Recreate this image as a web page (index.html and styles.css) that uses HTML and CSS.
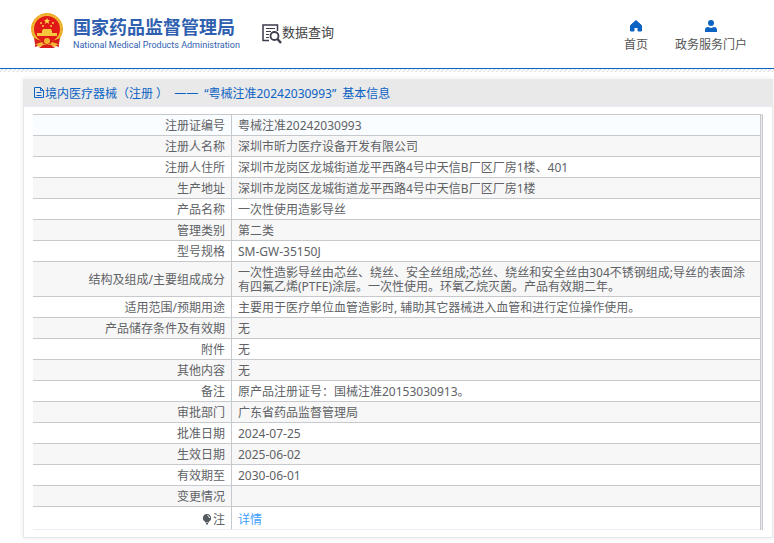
FILE: index.html
```html
<!DOCTYPE html>
<html lang="zh-CN">
<head>
    <meta charset="UTF-8">
    <meta name="viewport" content="width=device-width, initial-scale=1.0">
    <title>国家药品监督管理局 数据查询</title>
    <link rel="stylesheet" href="styles.css">
</head>
<body>
    <header class="header">
        <a href="#" class="logo">
            <svg class="emblem" width="34" height="36" viewBox="0 0 34 36">
                <path d="M6 24 L5 34 L11 32 L17 34 L23 32 L29 34 L28 24 Z" fill="#d81e1a"/>
                <circle cx="17" cy="16" r="16" fill="#f2b632"/>
                <circle cx="17" cy="16" r="15" fill="none" stroke="#dc9a20" stroke-width="1" stroke-dasharray="2 2"/>
                <circle cx="17" cy="16" r="13" fill="#e01818"/>
                <path d="M17 5 l1 2 h2 l-1.500 1.500 l.5 2.500 l-2 -1.500 l-2 1.500 l.5 -2.500 l-1.500 -1.500 h2 Z" fill="#ffd84a"/>
                <g fill="#f8c63c">
                    <circle cx="11" cy="10" r="1"/>
                    <circle cx="23" cy="10" r="1"/>
                    <circle cx="13" cy="13" r="1"/>
                    <circle cx="21" cy="13" r="1"/>
                    <path d="M13 16 h8 l1 2 h-10 Z M12 18 h10 v2 h5 v3 h-20 v-3 h5 Z"/>
                </g>
                <path d="M4 25 Q11 29 17 27 Q23 29 30 25 L29 31 Q22 29 17 32 Q12 29 5 31 Z" fill="#d81e1a"/>
                <circle cx="17" cy="28" r="3" fill="#f2b632"/>
                <path d="M6 31 L12 29 L14 32 L9 34 Z M28 31 L22 29 L20 32 L25 34 Z" fill="#f2b632"/>
                <path d="M13 32 L17 33 L21 32 L25 35 H9 Z" fill="#d81e1a"/>
            </svg>
            <span class="logo-text">
                <strong>国家药品监督管理局</strong>
                <span class="logo-en">National Medical Products Administration</span>
            </span>
        </a>
        <a href="#" class="query">
            <svg width="20" height="20" viewBox="0 0 20 20" fill="none" stroke="#3c3c4c">
                <path d="M7 16.500 H1 V1 H15.500 V7" stroke-width="1.500"/>
                <path d="M4 4.500 H13 M4 7.500 H9 M4 10.500 H7 M4 13.500 H7"/>
                <circle cx="12.500" cy="12" r="4" stroke-width="1.800"/>
                <path d="M15.500 15 L19 19" stroke-width="2.400"/>
            </svg>
            <span>数据查询</span>
        </a>
        <nav class="nav">
            <a href="#">
                <svg width="14" height="14" viewBox="0 0 14 14">
                    <path d="M7 1.500 L1.500 6.500 V12 H5 V8.500 H9 V12 H12.500 V6.500 Z" fill="#0c63c4" stroke="#0c63c4" stroke-linejoin="round"/>
                </svg>
                <span>首页</span>
            </a>
            <a href="#">
                <svg width="14" height="14" viewBox="0 0 14 14" fill="#0c63c4">
                    <circle cx="7" cy="4" r="3"/>
                    <path d="M1 13 V11 Q1 8 4 8 L7 9 L10 8 Q13 8 13 11 V13 Z"/>
                </svg>
                <span>政务服务门户</span>
            </a>
        </nav>
    </header>

    <main class="panel">
        <h1 class="panel-title">
            <svg width="11" height="12" viewBox="0 0 11 12" fill="none" stroke="#0c63c4">
                <path d="M.5 .5 H6.500 L9.500 3.500 V10.500 H.5 Z M6.500 .5 V3.500 H9.500 M2.500 5.500 H7.500 M2.500 8.500 H7.500"/>
            </svg>
            <span class="title-text">
                <span>境内医疗器械（注册 ）</span>
                <span>——</span>
                <span>“粤械注准20242030993”</span>
                <span>基本信息</span>
            </span>
        </h1>
        <div class="table-wrap">
            <table class="info">
                <tbody>
                    <tr><th>注册证编号</th><td>粤械注准20242030993</td></tr>
                    <tr><th>注册人名称</th><td>深圳市昕力医疗设备开发有限公司</td></tr>
                    <tr><th>注册人住所</th><td>深圳市龙岗区龙城街道龙平西路4号中天信B厂区厂房1楼、401</td></tr>
                    <tr><th>生产地址</th><td>深圳市龙岗区龙城街道龙平西路4号中天信B厂区厂房1楼</td></tr>
                    <tr><th>产品名称</th><td>一次性使用造影导丝</td></tr>
                    <tr><th>管理类别</th><td>第二类</td></tr>
                    <tr><th>型号规格</th><td>SM-GW-35150J</td></tr>
                    <tr><th>结构及组成/主要组成成分</th><td>一次性造影导丝由芯丝、绕丝、安全丝组成;芯丝、绕丝和安全丝由304不锈钢组成;导丝的表面涂有四氟乙烯(PTFE)涂层。一次性使用。环氧乙烷灭菌。产品有效期二年。</td></tr>
                    <tr><th>适用范围/预期用途</th><td>主要用于医疗单位血管造影时, 辅助其它器械进入血管和进行定位操作使用。</td></tr>
                    <tr><th>产品储存条件及有效期</th><td>无</td></tr>
                    <tr><th>附件</th><td>无</td></tr>
                    <tr><th>其他内容</th><td>无</td></tr>
                    <tr><th>备注</th><td>原产品注册证号：国械注准20153030913。</td></tr>
                    <tr><th>审批部门</th><td>广东省药品监督管理局</td></tr>
                    <tr><th>批准日期</th><td>2024-07-25</td></tr>
                    <tr><th>生效日期</th><td>2025-06-02</td></tr>
                    <tr><th>有效期至</th><td>2030-06-01</td></tr>
                    <tr><th>变更情况</th><td></td></tr>
                    <tr class="note">
                        <th>
                            <svg width="10" height="12" viewBox="0 0 10 12">
                                <path d="M5 1 A4 4 0 0 0 3 8.500 V9.500 H7 V8.500 A4 4 0 0 0 5 1 Z M4 10 H6 V11.500 H4 Z" fill="#555a60"/>
                                <path d="M5.500 2.500 Q7.500 3 7.500 5" fill="none" stroke="#fff"/>
                            </svg>注
                        </th>
                        <td><a href="#">详情</a></td>
                    </tr>
                </tbody>
            </table>
        </div>
    </main>
</body>
</html>
```

FILE: styles.css
```css
* {
    margin: 0;
    padding: 0;
    box-sizing: border-box;
}

body {
    font-family: "Noto Sans", "Noto Sans CJK SC", sans-serif;
    font-size: 12px;
    color: #606266;
    background: #fff;
}

a {
    text-decoration: none;
}

svg {
    flex-shrink: 0;
}

.header {
    display: flex;
    position: relative;
    height: 69px;
    margin-bottom: 10px;
    padding: 0 27px 0 30px;
    border-bottom: 1px solid #0c63c4;
}

/* 蓝线下方的斜纹 */
.header::after {
    content: '';
    position: absolute;
    top: 100%;
    left: 0;
    width: 100%;
    margin-top: 1px;
    height: 3px;
    background: repeating-linear-gradient(135deg, #fff 0, #fff 1px, #dcdcdc 2px, #fff 3px);
}

.logo {
    display: flex;
    gap: 9px;
    padding-top: 13px;
    color: #2f60b0;
}

.logo-text {
    display: flex;
    flex-direction: column;
    white-space: nowrap;
}

.logo strong {
    font-size: 18px;
    line-height: 28px;
    font-weight: 700;
}

.logo-en {
    font-family: Roboto, Arial, sans-serif;
    font-size: 9px;
    line-height: 8px;
}

.query {
    display: flex;
    margin-left: 22px;
    padding-top: 24px;
    color: #444;
    font-size: 13px;
    line-height: 16px;
}

.nav {
    display: flex;
    gap: 27px;
    margin-left: auto;
    padding-top: 19px;
}

.nav a {
    display: flex;
    flex-direction: column;
    align-items: center;
    gap: 3px;
    color: #555;
    line-height: 18px;
}

.panel {
    margin: 0 1px 4px 23px;
    border: 1px solid #e6e7ea;
    border-top: 0;
    box-shadow: 0 0 6px rgba(0, 0, 0, 0.08);
}

.panel-title {
    display: flex;
    align-items: center;
    height: 28px;
    padding-left: 10px;
    background: #e9e9e9;
    border-bottom: 1px solid #e6ebf5;
    color: #0c63c4;
    font-size: 12px;
    font-weight: 400;
}

.title-text {
    display: flex;
    gap: 6px;
}

.table-wrap {
    margin: 7px 9px;
    padding-right: 1px;
    border-right: 1px solid #c8c9cc;
    background: #ebebee;
}

.info {
    width: 100%;
    border-collapse: separate;
    border-spacing: 0;
    table-layout: fixed;
    background: #fff;
    line-height: 14px;
    border-right: 1px solid #c8c9cc;
}

.info th,
.info td {
    height: 21px;
    padding: 4px 6px 2px;
    border-top: 1px solid #c8c9cc;
    font-weight: 400;
    vertical-align: middle;
}

.info th {
    width: 199px;
    border-right: 1px solid #c8c9cc;
    text-align: right;
}

.info tr:nth-child(even) {
    background: #f7f7f7;
}

.info tr:first-child {
    background: #fafdff;
}

.info .note th,
.info .note td {
    height: 24px;
    padding-top: 5px;
    border-bottom: 1px solid #ebeef5;
}

.note svg {
    vertical-align: -1px;
    margin-right: 1px;
}

.note a {
    color: #409eff;
}
```
